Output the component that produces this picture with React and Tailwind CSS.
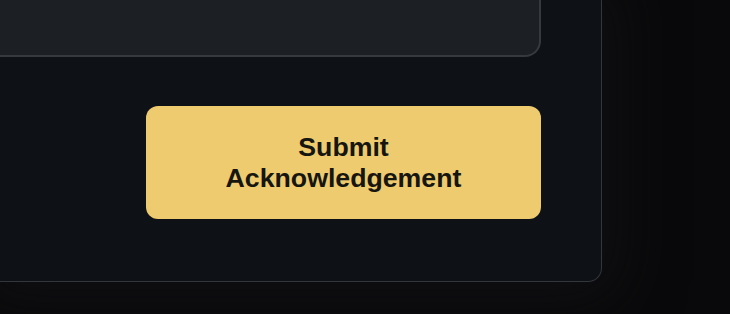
export default function App() {
  return (
    <div
      className="h-[314px] w-[730px] overflow-hidden bg-[#09090b]"
      style={{ fontFamily: '"Liberation Sans", Arial, sans-serif' }}
    >
      {/* panel, top-left cut off by the viewport */}
      <div className="flex h-[282px] w-[602px] flex-col rounded-br-[14px] border-r border-b border-[#33363b] bg-[#0e1116] pr-[60px] shadow-[0_0_60px_20px_rgba(20,20,24,0.6)]">
        {/* card above */}
        <div className="h-[57px] w-full rounded-br-2xl border-r-2 border-b-2 border-[#36393e] bg-[#1c1f24]" />

        {/* action */}
        <div className="mt-[49px] flex justify-end">
          <button className="h-[113px] w-[395px] rounded-xl bg-[#edcb6e] text-[26.7px] leading-[31px] font-bold text-[#16150f]">
            Submit
            <br />
            Acknowledgement
          </button>
        </div>
      </div>
    </div>
  );
}
